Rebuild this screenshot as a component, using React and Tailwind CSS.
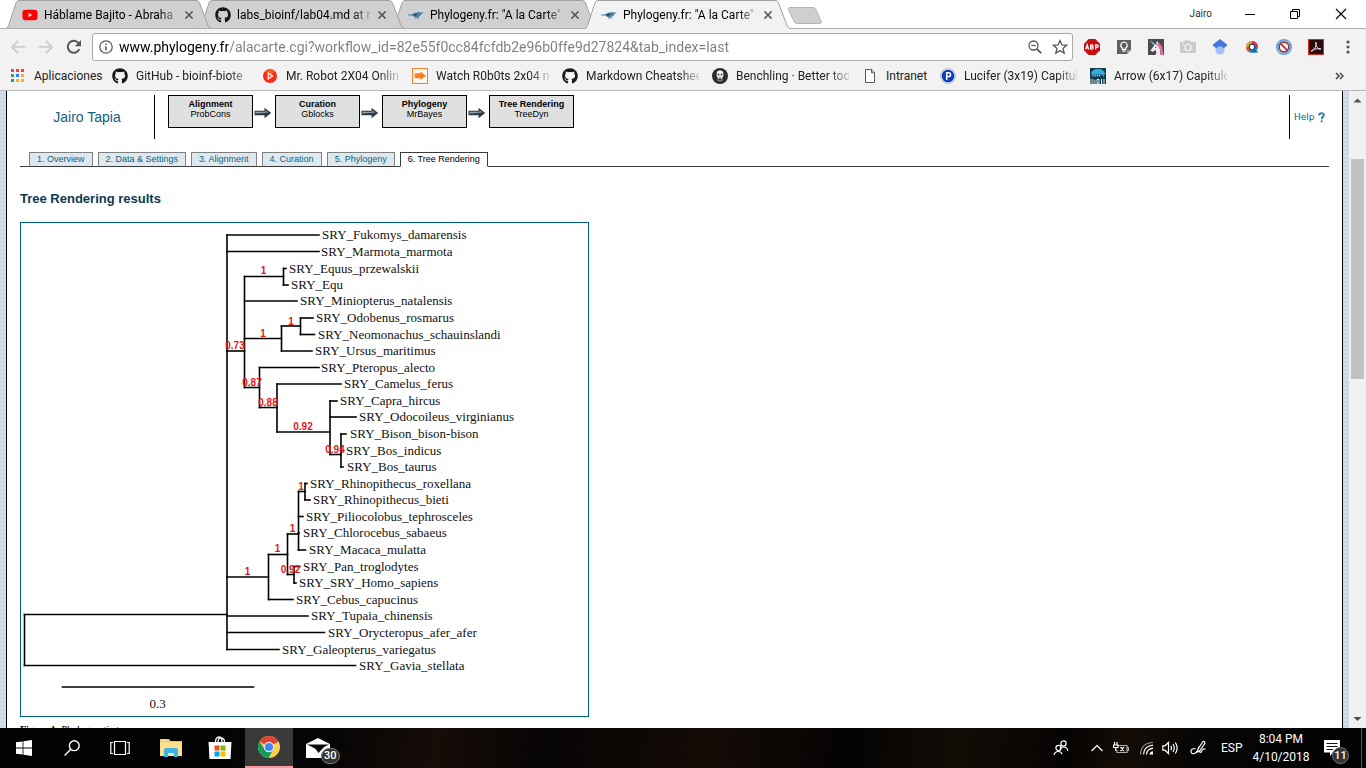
import React from "react";
import { FaGithub, FaYoutube } from "react-icons/fa";

const UI = "font-[Roboto,'Open_Sans',sans-serif]";
const ARIAL = "font-['Liberation_Sans',Arial,sans-serif]";

/* ---------- small drawings ---------- */

const Bird = () => (
  <svg width="16" height="16" viewBox="0 0 16 16" aria-hidden="true">
    <path d="M0 7.800 L5 7 Q6.500 5 9.500 5.600 L10.600 4.800 L12.500 5.600 L16 5.500 L13.600 7 Q12.600 9.600 9.600 10.400 L8 10.400 Q5.500 10 4.600 8.600 L0 8.600 Z" fill="#4a83a8" />
    <path d="M5 7.500 Q7 6 9.600 6.600 Q9 9.300 6.400 9.200 Z" fill="#235474" />
    <path d="M8 10.400 L7.600 12 M9.800 10.200 L10.200 12" stroke="#51606c" strokeWidth="0.8" />
  </svg>
);

const AppsIcon = () => (
  <svg width="16" height="16" viewBox="0 0 16 16" aria-hidden="true">
    {[
      [1, 1, "#f44336"], [6, 1, "#f44336"], [11, 1, "#f44336"],
      [1, 6, "#23a45a"], [6, 6, "#2d7ff0"], [11, 6, "#fbae17"],
      [1, 11, "#23a45a"], [6, 11, "#fbae17"], [11, 11, "#fbae17"],
    ].map(([x, y, c]) => (
      <rect key={`${x}-${y}`} x={x} y={y} width="3" height="3" fill={c} />
    ))}
  </svg>
);

const GitIcon = () => <FaGithub className="size-4 text-[#191717]" aria-hidden="true" />;

const PlayIcon = () => (
  <svg width="16" height="16" viewBox="0 0 16 16" aria-hidden="true">
    <circle cx="8" cy="8" r="7" fill="#f92a12" />
    <path d="M3 3.200 A7 7 0 0 1 13 3 L8 8 Z" fill="#fb7a18" opacity=".6" />
    <path d="M6.200 5 L10.800 8 L6.200 11 Z" fill="#f4573c" stroke="#fff" strokeWidth="1.100" />
  </svg>
);

const WatchIcon = () => (
  <svg width="16" height="16" viewBox="0 0 16 16" aria-hidden="true">
    <rect x=".5" y=".5" width="15" height="15" fill="#fff6ee" stroke="#f5822a" />
    <path d="M2 6 L4 5.300 H8.500 V3.400 L14 7.800 L8.500 12 V10.200 H4.500 L2 9.600 L3.500 8.800 L1.800 8 L3.500 7.200 Z" fill="#fa7f22" />
  </svg>
);

const BenchIcon = () => (
  <svg width="16" height="16" viewBox="0 0 16 16" aria-hidden="true">
    <circle cx="8" cy="8" r="8" fill="#2b2d30" />
    <path d="M4.600 6 a3.400 3.400 0 0 1 6.800 0 v1.400 l-.9 1.600 v1.600 h-5 V9 l-.9-1.600 Z" fill="#fff" />
    <circle cx="6.500" cy="6.600" r="1" fill="#2b2d30" />
    <circle cx="9.500" cy="6.600" r="1" fill="#2b2d30" />
    <path d="M7.300 9 h1.400" stroke="#2b2d30" strokeWidth="1" />
    <path d="M5.500 12 h1.200 M7.400 12.800 h1.200 M9.300 12 h1.200" stroke="#fff" strokeWidth="1" />
  </svg>
);

const PageIcon = () => (
  <svg width="16" height="16" viewBox="0 0 16 16" aria-hidden="true">
    <path d="M3.500 1.500 H9.500 L12.500 4.800 V14.500 H3.500 Z" fill="#fff" stroke="#5a5a5a" />
    <path d="M9.500 1.500 V4.800 H12.500" fill="none" stroke="#5a5a5a" />
  </svg>
);

const PIcon = () => (
  <svg width="16" height="16" viewBox="0 0 16 16" aria-hidden="true">
    <circle cx="8" cy="8" r="7.600" fill="#d9dde3" stroke="#aab" strokeWidth=".5" />
    <circle cx="8" cy="8" r="6.300" fill="#0d3fc0" />
    <path d="M6.700 12 V4.700 H8.600 a1.900 1.900 0 0 1 0 3.900 H6.700" fill="none" stroke="#fff" strokeWidth="1.500" />
  </svg>
);

const ArrowShowIcon = () => (
  <svg width="16" height="16" viewBox="0 0 16 16" aria-hidden="true">
    <rect width="16" height="16" fill="#123f50" />
    <path d="M1 6 Q2 1 8 1 Q14 1 15 6 L13 9 H2 Z" fill="#35aede" />
    <path d="M1 6.500 H13 V9 H1 Z" fill="#1a4f66" />
    <path d="M2.500 7.700 h8" stroke="#9fdcf2" strokeWidth=".9" strokeDasharray="1.500 .6" />
    <path d="M0 10.500 L6 12 V16 H0 Z" fill="#76848c" />
    <path d="M7 11.500 v4 M9 11.500 v4 M7 11.500 h2 M7 15.500 h2 M11.500 11 v5 M14 11 v5" stroke="#e6f2f6" strokeWidth="1" />
  </svg>
);

const CloseX = () => (
  <svg width="8" height="8" viewBox="0 0 8 8" aria-hidden="true">
    <path d="M.4 .4 L7.600 7.600 M7.600 .4 L.4 7.600" stroke="#505050" strokeWidth="1.500" />
  </svg>
);

const FlowArrow = () => (
  <svg width="18" height="12" viewBox="0 0 18 12" aria-hidden="true">
    <path d="M.5 3.800 H10.500 V.8 L17.200 6 L10.500 11.200 V8.200 H.5 Z" fill="#2c3a43" />
    <path d="M1.500 4.800 H11.600 V3.400 L14.300 5.500 L1.500 6.600 Z" fill="#93a3ad" />
  </svg>
);

/* ---------- browser chrome ---------- */

const browserTabs = [
  { icon: <FaYoutube className="size-4 text-[#f00]" aria-hidden="true" />, title: "Háblame Bajito - Abraha", z: "z-30" },
  { icon: <GitIcon />, title: "labs_bioinf/lab04.md at r", z: "z-20" },
  { icon: <Bird />, title: 'Phylogeny.fr: "A la Carte"', z: "z-10" },
  { icon: <Bird />, title: 'Phylogeny.fr: "A la Carte"', z: "z-40", active: true },
];

function BrowserTab({ icon, title, z, active }) {
  return (
    <div className={`relative -ml-[13px] flex h-[29px] w-[206px] items-center pl-4 ${z}`}>
      <svg className="absolute inset-0" width="206" height="29" viewBox="0 0 206 29" aria-hidden="true">
        <path
          d={`M0 ${active ? 29 : 28} Q1.5 28 2.5 25.5 L10 3 Q11 .5 13 .5 H190 Q192.500 .5 193.500 3 L202 25.500 Q203.500 28 206 ${active ? 29 : 28} Z`}
          fill={active ? "#f2f2f2" : "#d0d0d0"}
        />
        <path
          d="M0 28.500 Q1.500 28 2.500 25.500 L10 3 Q11 .5 13 .5 H190 Q192.500 .5 193.500 3 L202 25.500 Q203.500 28.500 206 28.500"
          fill="none"
          stroke="#a0a0a0"
        />
      </svg>
      <button type="button" className="relative flex min-w-0 items-center gap-[6px]">
        {icon}
        <span className="block w-[133px] whitespace-nowrap text-left text-xs leading-4 text-black [mask-image:linear-gradient(to_right,#000_115px,transparent_137px)]">
          {title}
        </span>
      </button>
      <button type="button" aria-label="Close tab" className="relative ml-2">
        <CloseX />
      </button>
    </div>
  );
}

function TabStrip() {
  return (
    <div className="flex h-[29px] shrink-0 items-start justify-between border-b border-[#b0b0b0] bg-white">
      <div className="flex pl-[19px]">
        {browserTabs.map((t, i) => (
          <BrowserTab key={i} {...t} />
        ))}
        <button type="button" aria-label="New tab" className="-ml-1 mt-[6px] h-[18px]">
          <svg width="36" height="18" viewBox="0 0 36 18" aria-hidden="true">
            <path d="M3 1.500 H26 Q28 1.500 29 3.500 L34 15 Q35 17.500 33 17.500 H10 Q8 17.500 7 15.500 L1.500 3.500 Q.8 1.500 3 1.500 Z" fill="#cfcfcf" stroke="#b4b4b4" />
          </svg>
        </button>
      </div>
      <div className="flex h-[27px] items-center">
        <span className="mr-8 text-[10px] leading-4 text-[#333]">Jairo</span>
        <button type="button" aria-label="Minimize" className="mr-[33px]">
          <svg width="12" height="12" viewBox="0 0 12 12"><path d="M1 6.500 H11" stroke="#000" /></svg>
        </button>
        <button type="button" aria-label="Restore" className="mr-[34px]">
          <svg width="12" height="12" viewBox="0 0 12 12"><path d="M1.500 3.500 H8.500 V10.500 H1.500 Z M3.500 3.500 V1.500 H10.500 V8.500 H8.500" fill="none" stroke="#000" /></svg>
        </button>
        <button type="button" aria-label="Close" className="mr-[19px]">
          <svg width="12" height="12" viewBox="0 0 12 12"><path d="M1 1 L11 11 M11 1 L1 11" stroke="#000" strokeWidth="1.100" /></svg>
        </button>
      </div>
    </div>
  );
}

const extensions = [
  ["Adblock Plus",
    <svg width="16" height="16" viewBox="0 0 16 16">
      <path d="M4.700 0 H11.300 L16 4.700 V11.300 L11.300 16 H4.700 L0 11.300 V4.700 Z" fill="#c70d12" />
      <path d="M1.700 10.500 L3.200 5.800 L4.700 10.500 M2.200 9 H4.300 M6.600 5.700 V10.300 M6.500 5.800 H8 a1.050 1.050 0 0 1 0 2.100 H6.600 M8 7.900 a1.150 1.150 0 0 1 0 2.300 H6.600 M11.700 10.500 V5.800 H13 a1.300 1.300 0 0 1 0 2.600 H11.700" fill="none" stroke="#fff" strokeWidth="1.200" />
    </svg>],
  ["Keep",
    <svg width="16" height="16" viewBox="0 0 16 16">
      <path d="M1 1 H15 V11 L11 15 H1 Z" fill="#5f5f5f" />
      <path d="M11 15 V11 H15 Z" fill="#9a9a9a" />
      <path d="M8 3 a3.200 3.200 0 0 1 1.700 5.900 V10.300 H6.300 V8.900 A3.200 3.200 0 0 1 8 3 Z" fill="none" stroke="#fff" strokeWidth="1.200" />
      <path d="M6.200 12 H9.800" stroke="#fff" strokeWidth="1.200" />
    </svg>],
  ["Unicorn",
    <svg width="16" height="16" viewBox="0 0 16 16">
      <rect width="16" height="16" fill="#4a4a4c" />
      <path d="M2.500 11.500 L6.500 6 L10 4 L12 6 L12.500 16 H7.500 Q9 12.500 7.500 11 L4.500 13 Z" fill="#f3eaf2" />
      <path d="M8.500 4.500 Q11 3 12.800 5.500 Q15 8 14.500 11 L15.500 16 H12.500 Q13.500 12.500 11.500 10.500 Q11 7 8 6 Z" fill="#ef6ba0" />
      <path d="M1.500 1 L7.500 5 L6 6.500 Z" fill="#6fd0df" />
      <path d="M8 4.500 L9.500 2 L10.500 4.500 Z" fill="#fff" />
      <circle cx="7.600" cy="8.300" r=".6" fill="#444" />
    </svg>],
  ["Screenshot",
    <svg width="16" height="16" viewBox="0 0 16 16">
      <path d="M0 3 H4 V1.500 H10.500 L11.500 3 H16 V14 H0 Z" fill="#cbcbcb" />
      <circle cx="8" cy="8.500" r="3.100" fill="none" stroke="#f4f4f4" strokeWidth="1.300" />
      <path d="M2 5 H4" stroke="#f4f4f4" />
    </svg>],
  ["Scholar",
    <svg width="16" height="16" viewBox="0 0 16 16">
      <circle cx="8" cy="11" r="4.600" fill="#a0c1fa" />
      <path d="M8 0 L15.700 6 L11.800 9.200 Q8 5.500 4.200 9.200 L.3 6 Z" fill="#4377dd" />
    </svg>],
  ["Color picker",
    <svg width="16" height="16" viewBox="0 0 16 16">
      <circle cx="8" cy="8" r="4.200" fill="#fff" stroke="#1690d0" strokeWidth="3.600" />
      <path d="M3.800 8 A4.200 4.200 0 0 1 8 3.800" fill="none" stroke="#f0a81b" strokeWidth="3.600" />
      <path d="M8 3.800 A4.200 4.200 0 0 1 12.200 8" fill="none" stroke="#dd3340" strokeWidth="3.600" />
      <path d="M3.800 8 A4.200 4.200 0 0 0 6 11.700" fill="none" stroke="#e9562a" strokeWidth="3.600" />
      <circle cx="8" cy="8" r="2.800" fill="none" stroke="#1b4d86" strokeWidth="1.200" />
      <path d="M10 9.500 L14.500 13.500 H9 Z" fill="#1a6a8c" />
    </svg>],
  ["Blocker",
    <svg width="16" height="16" viewBox="0 0 16 16">
      <circle cx="8" cy="8" r="7.300" fill="#fff" stroke="#52a9e6" strokeWidth="1.400" />
      <circle cx="8" cy="8" r="4.800" fill="#f6f6f6" stroke="#a8303a" strokeWidth="1.500" />
      <path d="M4.600 4.600 L11.400 11.400" stroke="#a8303a" strokeWidth="1.500" />
      <circle cx="8" cy="8" r="6" fill="none" stroke="#3c5f96" strokeWidth=".8" />
    </svg>],
  ["Acrobat",
    <svg width="16" height="16" viewBox="0 0 16 16">
      <rect x=".5" y=".5" width="15" height="15" fill="#2b0a0d" stroke="#d9291c" />
      <path d="M7.400 3.200 Q8.800 2.800 8.200 5.800 Q7.500 9 4.600 12 Q3 12.800 3.400 11.600 Q5.500 9.600 12.600 9.400 Q13.400 10.600 11.400 10.400 Q8 8.500 7.400 3.200 Z" fill="none" stroke="#e5d8d8" strokeWidth="1" />
    </svg>],
];

function Toolbar() {
  return (
    <div className="flex h-9 shrink-0 items-center bg-[#f2f2f2] pl-[10px]">
      <button type="button" aria-label="Back" className="mr-3">
        <svg width="16" height="16" viewBox="0 0 16 16"><path d="M15 8 H2.500 M8 2 L2 8 L8 14" fill="none" stroke="#d0d0d0" strokeWidth="2" /></svg>
      </button>
      <button type="button" aria-label="Forward" className="mr-3">
        <svg width="16" height="16" viewBox="0 0 16 16"><path d="M1 8 H13.500 M8 2 L14 8 L8 14" fill="none" stroke="#d0d0d0" strokeWidth="2" /></svg>
      </button>
      <button type="button" aria-label="Reload" className="mr-[10px]">
        <svg width="16" height="16" viewBox="0 0 16 16">
          <path d="M13.300 10.200 A6 6 0 1 1 12.400 3.900" fill="none" stroke="#555" strokeWidth="2" />
          <path d="M15 1 V7.200 H8.800 Z" fill="#555" />
        </svg>
      </button>
      <div className="flex h-7 min-w-0 flex-1 items-center rounded-[3px] border border-[#aaa] bg-white pl-[6px]">
        <svg width="14" height="14" viewBox="0 0 14 14" className="mr-[6px] shrink-0" aria-hidden="true">
          <circle cx="7" cy="7" r="6.200" fill="none" stroke="#5a5a5a" strokeWidth="1.300" />
          <path d="M7 6.200 V10.500 M7 3.400 V5" stroke="#5a5a5a" strokeWidth="1.500" />
        </svg>
        <input
          aria-label="Address"
          className="min-w-0 flex-1 bg-[linear-gradient(to_right,#000_109px,#7d7d7d_109px)] bg-clip-text text-sm leading-5 text-transparent outline-none"
          defaultValue="www.phylogeny.fr/alacarte.cgi?workflow_id=82e55f0cc84fcfdb2e96b0ffe9d27824&tab_index=last"
        />
        <button type="button" aria-label="Zoom" className="mr-[10px]">
          <svg width="14" height="14" viewBox="0 0 14 14">
            <circle cx="5.500" cy="5.500" r="4.500" fill="none" stroke="#555" strokeWidth="1.300" />
            <path d="M3.300 5.500 H7.700" stroke="#555" strokeWidth="1.200" />
            <path d="M8.800 8.800 L13.200 13.200" stroke="#555" strokeWidth="1.800" />
          </svg>
        </button>
        <button type="button" aria-label="Bookmark" className="mr-1">
          <svg width="16" height="16" viewBox="0 0 16 16">
            <path d="M8 1.500 L9.900 6 L14.700 6.300 L11 9.500 L12.200 14.200 L8 11.600 L3.800 14.200 L5 9.500 L1.300 6.300 L6.100 6 Z" fill="none" stroke="#555" strokeWidth="1.300" />
          </svg>
        </button>
      </div>
      <div className="ml-[11px] flex gap-4">
        {extensions.map(([name, icon]) => (
          <button key={name} type="button" aria-label={name}>{icon}</button>
        ))}
        <button type="button" aria-label="Menu" className="mr-[10px]">
          <svg width="16" height="16" viewBox="0 0 16 16" fill="#555"><circle cx="8" cy="3" r="1.600" /><circle cx="8" cy="8" r="1.600" /><circle cx="8" cy="13" r="1.600" /></svg>
        </button>
      </div>
    </div>
  );
}

const FADE = "w-[113px] [mask-image:linear-gradient(to_right,#000_93px,transparent_117px)]";
const bookmarks = [
  [<AppsIcon />, "Aplicaciones", "w-[65px]"],
  [<GitIcon />, "GitHub - bioinf-biote", FADE],
  [<PlayIcon />, "Mr. Robot 2X04 Onlin", FADE],
  [<WatchIcon />, "Watch R0b0ts 2x04 m", FADE],
  [<GitIcon />, "Markdown Cheatshee", FADE],
  [<BenchIcon />, "Benchling · Better too", FADE],
  [<PageIcon />, "Intranet", "w-[41px]"],
  [<PIcon />, "Lucifer (3x19) Capitulo", FADE],
  [<ArrowShowIcon />, "Arrow (6x17) Capitulo", FADE],
];

function BookmarkBar() {
  return (
    <nav className="flex h-[26px] shrink-0 items-center gap-[13px] border-b border-[#b6b6b6] bg-[#f2f2f2] pb-[3px] pl-[10px] pr-[22px]">
      {bookmarks.map(([icon, label, size], i) => (
        <a key={i} href="#" className="flex shrink-0 items-center gap-2">
          {icon}
          <span className={`block whitespace-nowrap text-xs leading-4 text-[#222] ${size}`}>{label}</span>
        </a>
      ))}
      <button type="button" aria-label="More bookmarks" className="ml-auto">
        <svg width="9" height="8" viewBox="0 0 9 8"><path d="M1 1 L4 4 L1 7 M5 1 L8 4 L5 7" fill="none" stroke="#444" strokeWidth="1.500" /></svg>
      </button>
    </nav>
  );
}

/* ---------- phylogeny page ---------- */

const steps = [
  ["Alignment", "ProbCons"],
  ["Curation", "Gblocks"],
  ["Phylogeny", "MrBayes"],
  ["Tree Rendering", "TreeDyn"],
];

const pageTabs = ["1. Overview", "2. Data & Settings", "3. Alignment", "4. Curation", "5. Phylogeny", "6. Tree Rendering"];

/* leaf: [branch start x, branch end x, y, label x, name] */
const leaves = [
  [227, 319, 235, 322, "SRY_Fukomys_damarensis"],
  [227, 319, 251.5, 321, "SRY_Marmota_marmota"],
  [283.5, 286, 268.5, 289, "SRY_Equus_przewalskii"],
  [283.5, 288, 285, 291, "SRY_Equ"],
  [244.5, 297, 301, 300, "SRY_Miniopterus_natalensis"],
  [300.5, 313, 318, 316, "SRY_Odobenus_rosmarus"],
  [300.5, 314.5, 334.5, 318, "SRY_Neomonachus_schauinslandi"],
  [281.5, 312, 351, 315, "SRY_Ursus_maritimus"],
  [259.5, 319, 367.5, 321, "SRY_Pteropus_alecto"],
  [277, 341, 384, 344, "SRY_Camelus_ferus"],
  [330, 337, 401, 340, "SRY_Capra_hircus"],
  [330, 356, 417, 359, "SRY_Odocoileus_virginianus"],
  [341, 346, 434, 350, "SRY_Bison_bison-bison"],
  [341, 342, 450.5, 346, "SRY_Bos_indicus"],
  [341, 343, 467, 347, "SRY_Bos_taurus"],
  [305, 307, 483.5, 310, "SRY_Rhinopithecus_roxellana"],
  [305, 310, 500, 313, "SRY_Rhinopithecus_bieti"],
  [298.5, 303, 516.5, 306, "SRY_Piliocolobus_tephrosceles"],
  [298.5, 299, 533, 303, "SRY_Chlorocebus_sabaeus"],
  [298.5, 305.5, 550, 309, "SRY_Macaca_mulatta"],
  [294, 300, 566.5, 303, "SRY_Pan_troglodytes"],
  [294, 296, 583, 299, "SRY_SRY_Homo_sapiens"],
  [268.5, 293, 599.5, 296, "SRY_Cebus_capucinus"],
  [227, 308, 616, 311, "SRY_Tupaia_chinensis"],
  [227, 324.5, 632.5, 328, "SRY_Orycteropus_afer_afer"],
  [227, 279, 649.5, 282, "SRY_Galeopterus_variegatus"],
  [24.5, 355.5, 665.5, 359, "SRY_Gavia_stellata"],
];

const inner = [
  "M227 235 V649.500", "M24.500 614.500 H227", "M24.500 614.500 V665.500",
  "M227 351 H244.500", "M244.500 276.500 V387.500",
  "M244.500 276.500 H283.500", "M283.500 268.500 V285",
  "M244.500 338.500 H281.500", "M281.500 326 V351", "M281.500 326 H300.500", "M300.500 318 V334.500",
  "M244.500 387.500 H259.500", "M259.500 367.500 V407.500", "M259.500 407.500 H277", "M277 384 V432",
  "M277 432 H330", "M330 401 V454.500", "M330 454.500 H341", "M341 434 V467",
  "M227 577 H268.500", "M268.500 554.500 V599.500", "M268.500 554.500 H287.500", "M287.500 534 V574.500",
  "M287.500 534 H298.500", "M298.500 491.500 V550", "M298.500 491.500 H305", "M305 483.500 V500",
  "M287.500 574.500 H294", "M294 566.500 V583", "M62.500 687 H253.500",
];

const supports = [
  [263.5, 274, "1"], [291, 325, "1"], [263, 337, "1"], [235, 349, "0.73"], [252, 386, "0.87"], [268, 406, "0.88"],
  [303, 430, "0.92"], [335, 453, "0.94"], [301, 490, "1"], [292.5, 532, "1"], [277.5, 552, "1"], [290.5, 573, "0.92"],
  [247.5, 575, "1"],
];

function TreeFigure() {
  return (
    <svg width="567" height="493" viewBox="21 223 567 493" role="img" aria-label="Phylogenetic tree">
      <g stroke="#000" strokeWidth="1.600" strokeLinecap="square" fill="none">
        {inner.map((d) => <path key={d} d={d} />)}
        {leaves.map(([a, b, y, , n]) => <path key={n} d={`M${a} ${y} H${b}`} />)}
      </g>
      <g className="font-['Liberation_Serif',serif] text-[13px]" fill="#111">
        {leaves.map(([, , y, x, n]) => <text key={n} x={x} y={y + 4}>{n}</text>)}
        <text x="157.500" y="708" textAnchor="middle">0.3</text>
      </g>
      <g className="font-['Liberation_Sans',sans-serif] text-[10px] font-bold" fill="#e0181c" textAnchor="middle">
        {supports.map(([x, y, t]) => <text key={`${x}-${y}`} x={x} y={y}>{t}</text>)}
      </g>
    </svg>
  );
}

function PhylogenyPage() {
  return (
    <div className={`flex min-h-0 flex-1 overflow-hidden bg-[repeating-linear-gradient(to_bottom,#d3dfe9_0,#d3dfe9_2px,#c9d7e3_2px,#c9d7e3_4px)] pl-[6px] ${ARIAL}`}>
      <main className="min-w-0 flex-1 border-x border-black bg-white px-[13px] pt-1">
        <header className="flex items-start">
          <div className="flex h-11 w-[135px] items-center justify-center border-r border-black text-sm text-[#0f5f86]">Jairo Tapia</div>
          <ol className="ml-[13px] flex items-start">
            {steps.map(([name, tool], i) => (
              <li key={name} className="flex items-start">
                <div className="h-[33px] w-[85px] border border-black bg-[#e0e0e0] pt-[3px] text-center text-[9px] leading-[10px] text-black">
                  <div className="font-bold">{name}</div>
                  <div>{tool}</div>
                </div>
                {i < steps.length - 1 && <span className="ml-px mr-[3px] mt-3"><FlowArrow /></span>}
              </li>
            ))}
          </ol>
          <div className="ml-auto flex h-11 w-10 items-center gap-[3px] border-l border-black pl-1 font-['DejaVu_Sans','Liberation_Sans',sans-serif]">
            <a href="#" className="text-[9px] leading-3 text-[#0f5f86]">Help</a>
            <svg width="7" height="11" viewBox="0 0 8 12" aria-hidden="true">
              <path d="M1.300 3.600 Q1.300 1.200 4 1.200 Q6.800 1.200 6.600 3.500 Q6.500 5 4.600 6 L4.400 8" fill="none" stroke="#2d7fa8" strokeWidth="2.200" />
              <circle cx="4.200" cy="10.400" r="1.300" fill="#2d7fa8" />
            </svg>
          </div>
        </header>

        <nav className="mt-3 flex h-4 items-end gap-[5px] border-b border-[#3a3a3a] pl-[9px]">
          {pageTabs.map((label, i) => {
            const active = i === pageTabs.length - 1;
            return (
              <a
                key={label}
                href="#"
                className={`-mb-px flex h-[15px] items-start border px-[7px] pt-px text-[9px] leading-[11px] whitespace-nowrap ${active ? "border-[#3a3a3a] border-b-white bg-white text-black" : "border-[#808080] border-b-[#3a3a3a] bg-[#dde9ee] text-[#0f5f86]"}`}
              >
                {label}
              </a>
            );
          })}
        </nav>

        <h1 className="mt-6 text-[13px] font-bold leading-4 text-[#0b3954]">Tree Rendering results</h1>
        <figure className="mt-[15px]">
          <div className="inline-block border border-[#00608a] align-top">
            <TreeFigure />
          </div>
          <figcaption className="mt-[7px] font-['Liberation_Serif',serif] text-[10px] leading-3 text-black">
            <b>Figure 1:</b> Phylogenetic tree.
          </figcaption>
        </figure>
      </main>
      <div className="ml-[6px] flex w-[17px] shrink-0 flex-col items-center bg-[#f1f1f1]" role="scrollbar" aria-controls="root" aria-valuenow={15}>
        <svg width="17" height="17" viewBox="0 0 17 17" aria-hidden="true"><path d="M4.500 11.500 L8.500 7.500 L12.500 11.500 Z" fill="#505050" /></svg>
        <div className="mt-[51px] h-[220px] w-[13px] bg-[#c1c1c1]" />
        <svg className="mt-auto" width="17" height="17" viewBox="0 0 17 17" aria-hidden="true"><path d="M4.500 6 L8.500 10 L12.500 6 Z" fill="#505050" /></svg>
      </div>
    </div>
  );
}

/* ---------- taskbar ---------- */

function Badge({ children }) {
  return (
    <span className="absolute -bottom-[6px] left-[15px] flex h-4 min-w-[17px] items-center justify-center rounded-full border border-[#777] bg-[#333] px-[2px] text-[11px] font-medium leading-3 text-white">
      {children}
    </span>
  );
}

const trayIcons = [
  ["People", "mr-5", <g><circle cx="10.500" cy="3.500" r="2.600" /><path d="M6.800 8.800 Q8 7 10.500 7 Q14.500 7 14.700 11" /><circle cx="5.500" cy="8" r="2.600" /><path d="M1.200 15 Q1.500 11.500 5.500 11.500 Q8 11.500 9 14" /></g>],
  ["Show hidden icons", "mr-2", <path d="M2.500 11 L8 5.500 L13.500 11" />],
  ["Battery", "mr-[10px]", <g><path d="M5 5.500 H14 V12.500 H4 V10 M14 7.500 H15.500 V10.500 H14" stroke="#aaa" /><path d="M1.500 2 V5 M4 2 V5 M.5 5 H5 V7.500 H.5 Z M2.800 7.500 V11 M7.500 7 L11 11 M11 7 L7.500 11" /></g>],
  ["Network", "mr-[7px]", <g><path d="M1.500 14.500 Q2 3 14 2.500" stroke="#999" /><path d="M4.500 14.500 Q5 6 14 5.200 M7.500 14.500 Q8 9 14 8.200" /><path d="M10.500 14.500 Q10.800 11.500 14 11.200 V14.500 Z" fill="#fff" stroke="none" /></g>],
  ["Volume", "mr-3", <g><path d="M.8 5.800 H3 L6.500 2.500 V13.500 L3 10.200 H.8 Z M8.800 5.800 Q10.200 8 8.800 10.200 M11 4 Q13.600 8 11 12 M13.300 2.500 Q17 8 13.300 13.500" /></g>],
  ["Ink", "mr-[15px]", <g><path d="M8 9 L13 1.500 Q15 1 14.800 3.500 L9.500 11 Q7.500 12.500 7.200 11.500 Z M5.500 8.500 Q.8 8.500 1 11.500 Q1.500 14.500 4.500 13.500 Q7.500 12.500 9 6.500 M9.500 11.500 Q11.500 13.500 12 10.500 Q13 8.500 15.500 9" /></g>],
];

function Taskbar() {
  return (
    <footer className="flex h-10 shrink-0 items-center bg-[linear-gradient(100deg,#030303_0,#050505_24%,#160c08_32%,#060404_40%,#140b06_52%,#040303_62%,#120c06_70%,#050303_78%,#150c06_82%,#050505_88%,#030303_100%)] text-white">
      <button type="button" aria-label="Start" className="flex h-full w-12 items-center justify-center">
        <svg width="16" height="16" viewBox="0 0 16 16" fill="#fff"><path d="M0 2.300 L6.600 1.400 V7.600 H0 Z M7.400 1.300 L16 0 V7.600 H7.400 Z M0 8.400 H6.600 V14.600 L0 13.700 Z M7.400 8.400 H16 V16 L7.400 14.700 Z" /></svg>
      </button>
      <button type="button" aria-label="Search" className="flex h-full w-12 items-center justify-center">
        <svg width="16" height="16" viewBox="0 0 16 16" fill="none" stroke="#fff" strokeWidth="1.400"><circle cx="10.300" cy="5.700" r="4.900" /><path d="M6.800 9.200 L.6 15.400" /></svg>
      </button>
      <button type="button" aria-label="Task view" className="flex h-full w-12 items-center justify-center">
        <svg width="20" height="16" viewBox="0 0 20 16" fill="none" stroke="#fff" strokeWidth="1.200"><path d="M4.500 1.500 H15.500 V14.500 H4.500 Z M3 2.500 H.8 V13.500 H3 M17 2.500 H19.200 V13.500 H17" /></svg>
      </button>
      <button type="button" aria-label="File Explorer" className="ml-[3px] flex h-full w-12 items-center justify-center">
        <svg width="22" height="20" viewBox="0 0 22 20"><path d="M0 1 H9 L10.500 3 H22 V18 H0 Z" fill="#f5c64c" /><path d="M0 4 H22 V18 H0 Z" fill="#fde08c" /><path d="M4 19 V12 Q4 10 6 10 H16 Q18 10 18 12 V19 H14 V15 H8 V19 Z" fill="#3db2e6" /><path d="M1.500 2.500 H7" stroke="#fff3c4" /></svg>
      </button>
      <button type="button" aria-label="Store" className="flex h-full w-[50px] items-center justify-center">
        <svg width="24" height="24" viewBox="0 0 24 24"><path d="M.5 6 H23.500 L22.500 23 H1.500 Z" fill="#fff" /><path d="M7.500 6 Q7.500 1 11 1 Q14 1 14 6 M10 6 Q10 1.800 13 1.800 Q16.500 2 16.500 6" fill="none" stroke="#fff" strokeWidth="1.300" /><path d="M6.500 9.500 H11.500 V14.500 H6.500 Z" fill="#f25022" /><path d="M12.500 9.500 H17.500 V14.500 H12.500 Z" fill="#7fba00" /><path d="M6.500 15.500 H11.500 V20.500 H6.500 Z" fill="#00a4ef" /><path d="M12.500 15.500 H17.500 V20.500 H12.500 Z" fill="#ffb900" /></svg>
      </button>
      <button type="button" aria-label="Chrome" className="flex h-full w-12 items-center justify-center border-b-2 border-[#f5979f] bg-[#393939]">
        <svg width="22" height="22" viewBox="0 0 22 22"><circle cx="11" cy="11" r="11" fill="#fcd04f" /><path d="M11 11 L1.500 5.500 A11 11 0 0 1 20.530 5.500 Z" fill="#db4437" /><path d="M11 0 A11 11 0 0 1 20.530 5.500 L11 6 Z" fill="#db4437" /><path d="M1.500 5.500 A11 11 0 0 0 10.500 22 L15.300 13.500 L11 11 L6.700 13.500 Z" fill="#0f9d58" /><circle cx="11" cy="11" r="5.200" fill="#f1f1f1" /><circle cx="11" cy="11" r="4.100" fill="#4285f4" /></svg>
      </button>
      <button type="button" aria-label="Mail" className="relative ml-[13px]">
        <svg width="24" height="20" viewBox="0 0 24 20"><path d="M0 6 L12 0 L24 6 V20 H0 Z" fill="#fff" /><path d="M1 6.500 H23 L12 12 Z" fill="#0a0a0a" /><path d="M9 10 L12.500 15 L19 8 Z" fill="#0a0a0a" /></svg>
        <Badge>30</Badge>
      </button>
      <div className="ml-auto flex h-full items-center">
        {trayIcons.map(([name, cls, art]) => (
          <button key={name} type="button" aria-label={name} className={cls}>
            <svg width="16" height="16" viewBox="0 0 16 16" fill="none" stroke="#fff" strokeWidth="1.200">{art}</svg>
          </button>
        ))}
        <span className="w-5 text-center text-xs leading-4">ESP</span>
        <time className="ml-[14px] flex w-[52px] flex-col items-center text-xs leading-[18px]">
          <span>8:04 PM</span>
          <span>4/10/2018</span>
        </time>
        <button type="button" aria-label="Notifications" className="relative ml-[17px] mr-[21px]">
          <svg width="16" height="16" viewBox="0 0 16 16"><path d="M0 0 H16 V12.500 H9 L6 16 V12.500 H0 Z" fill="#fff" /><path d="M2.500 3.500 H13.500 M2.500 6.500 H13.500 M2.500 9.500 H9" stroke="#111" /></svg>
          <span className="absolute -bottom-2 left-2 flex size-[17px] items-center justify-center rounded-full border border-[#777] bg-[#333] text-[11px] font-medium leading-3">11</span>
        </button>
        <span className="mr-1 h-full w-px bg-[#555]" />
      </div>
    </footer>
  );
}

export default function App() {
  return (
    <div className={`flex h-screen flex-col overflow-hidden ${UI}`}>
      <TabStrip />
      <Toolbar />
      <BookmarkBar />
      <PhylogenyPage />
      <Taskbar />
    </div>
  );
}
